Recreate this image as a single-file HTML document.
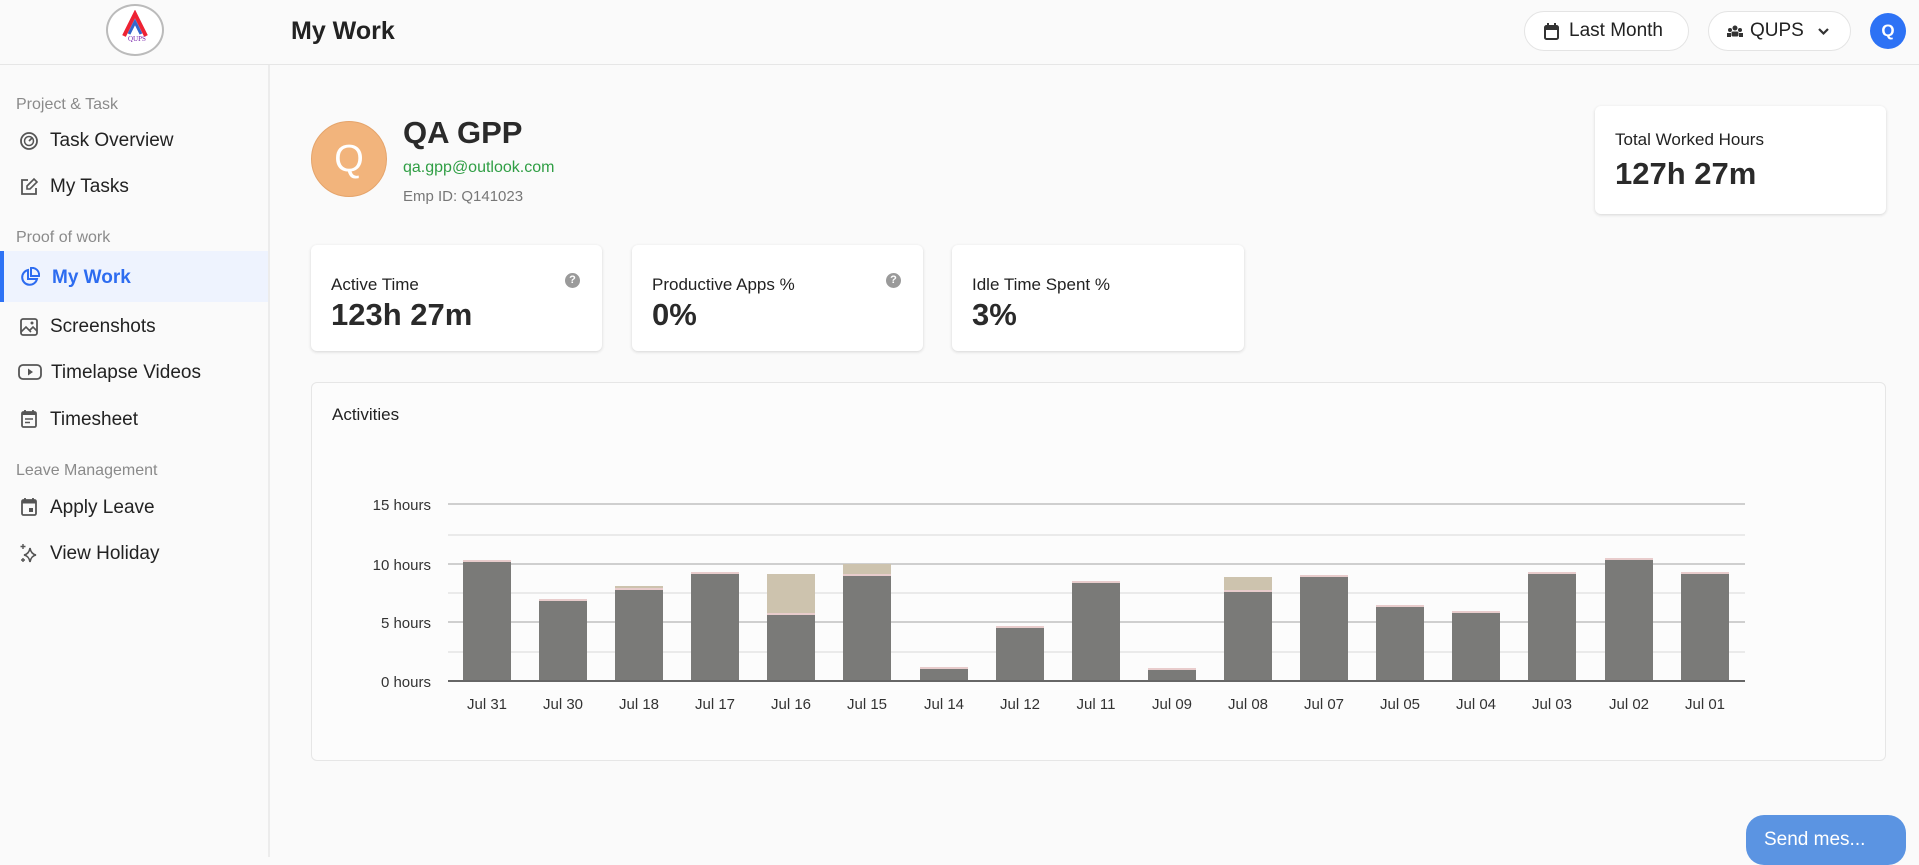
<!DOCTYPE html>
<html><head><meta charset="utf-8"><style>
*{box-sizing:border-box;margin:0;padding:0}
body{width:1919px;height:857px;overflow:hidden;background:#fafafa;font-family:"Liberation Sans",sans-serif;color:#222;position:relative}
.hdr{position:absolute;left:0;top:0;width:1919px;height:65px;border-bottom:1px solid #e6e6e6;background:#fafafa}
.side{position:absolute;left:0;top:65px;width:270px;height:792px;border-right:2px solid #ececec;background:#fafafa}
.lbl{position:absolute;left:16px;font-size:16px;color:#8a8a8a}
.it{position:absolute;left:50px;font-size:19px;color:#222}
.ic{position:absolute;left:19px;width:20px;height:20px}
.card{position:absolute;background:#fff;border-radius:6px;box-shadow:0 1px 3px rgba(0,0,0,.15)}
.ct{position:absolute;left:20px;top:30px;font-size:17px;color:#222}
.cv{position:absolute;left:20px;top:50px;font-size:31px;font-weight:bold;color:#2a2a2a}
.q{position:absolute;right:22px;top:28px;width:15px;height:15px;border-radius:50%;background:#9a9a9a;color:#fff;font-size:11px;font-weight:bold;text-align:center;line-height:15px}
.pill{position:absolute;top:11px;height:40px;border:1px solid #e4e4e4;border-radius:20px;background:#fff;font-size:19px;line-height:38px}
</style></head><body>
<div class="hdr">
 <div style="position:absolute;left:106px;top:4px;width:58px;height:52px;border-radius:50%;border:2px solid #bbb;background:#fff"></div>
 <svg style="position:absolute;left:118px;top:10px" width="34" height="32"><path d="M6 26 L17 4 L28 26" stroke="#e23" stroke-width="4" fill="none"/><path d="M11 24 L17 12 L23 24" stroke="#36c" stroke-width="3" fill="none"/><text x="10" y="31" font-size="7" fill="#72a" font-family="Liberation Serif">QUPS</text></svg>
 <div style="position:absolute;left:291px;top:17px;font-size:25px;font-weight:bold;color:#222">My Work</div>
 <div class="pill" style="left:1524px;width:165px"><svg style="position:absolute;left:19px;top:11px" width="15" height="17" viewBox="0 0 15 17"><rect x="1" y="3" width="13" height="13" rx="1.5" fill="none" stroke="#333" stroke-width="2"/><rect x="1" y="3" width="13" height="4" fill="#333"/><rect x="3" y="0" width="2" height="4" fill="#333"/><rect x="10" y="0" width="2" height="4" fill="#333"/></svg><span style="position:absolute;left:44px">Last Month</span></div>
 <div class="pill" style="left:1708px;width:143px"><svg style="position:absolute;left:18px;top:13px" width="16" height="12"><circle cx="8" cy="3" r="2.5" fill="#333"/><circle cx="3" cy="5" r="2" fill="#333"/><circle cx="13" cy="5" r="2" fill="#333"/><rect x="4.5" y="6.5" width="7" height="5" rx="1.5" fill="#333"/><rect x="0" y="8" width="4" height="4" fill="#333"/><rect x="12" y="8" width="4" height="4" fill="#333"/></svg><span style="position:absolute;left:41px">QUPS</span><svg style="position:absolute;left:108px;top:15px" width="13" height="9"><path d="M2 2 L6.5 6.5 L11 2" stroke="#333" stroke-width="2.2" fill="none"/></svg></div>
 <div style="position:absolute;left:1870px;top:13px;width:36px;height:36px;border-radius:50%;background:#2d72f5;color:#fff;font-weight:bold;font-size:17px;text-align:center;line-height:36px">Q</div>
</div>
<div class="side">
 <div class="lbl" style="top:31px">Project &amp; Task</div>
 <svg class="ic" style="top:66px" viewBox="0 0 20 20"><circle cx="10" cy="10" r="8" fill="none" stroke="#555" stroke-width="1.8"/><circle cx="10" cy="10" r="4.5" fill="none" stroke="#555" stroke-width="1.5"/><path d="M10 10 L13 7" stroke="#555" stroke-width="1.8"/></svg>
 <div class="it" style="top:65px">Task Overview</div>
 <svg class="ic" style="top:112px" viewBox="0 0 20 20"><path d="M9 3 H3 V17 H17 V11" fill="none" stroke="#555" stroke-width="1.8"/><path d="M8 12 L8 9 L15 2 L18 5 L11 12 Z" fill="none" stroke="#555" stroke-width="1.6"/></svg>
 <div class="it" style="top:111px">My Tasks</div>
 <div class="lbl" style="top:164px">Proof of work</div>
 <div style="position:absolute;left:0;top:186px;width:268px;height:51px;background:#eef3fe"></div>
 <div style="position:absolute;left:0;top:186px;width:4px;height:51px;background:#2d72f5"></div>
 <svg class="ic" style="top:202px;left:20px" viewBox="0 0 20 20"><path d="M8 3 A7.5 7.5 0 1 0 17 12 H8 Z" fill="none" stroke="#2d6cf0" stroke-width="2"/><path d="M11 1 A7 7 0 0 1 19 9 H11 Z" fill="none" stroke="#2d6cf0" stroke-width="2"/></svg>
 <div class="it" style="top:202px;left:52px;color:#2d6cf0;font-weight:bold">My Work</div>
 <svg class="ic" style="top:252px" viewBox="0 0 20 20"><rect x="2" y="2" width="16" height="16" rx="2" fill="none" stroke="#555" stroke-width="1.8"/><path d="M2 15 L7 10 L12 15 M11 13 L14 10 L18 14" fill="none" stroke="#555" stroke-width="1.6"/><circle cx="13" cy="6" r="1.5" fill="#555"/></svg>
 <div class="it" style="top:251px">Screenshots</div>
 <svg class="ic" style="top:297px;width:24px;left:18px" viewBox="0 0 24 20"><rect x="1" y="3" width="22" height="14" rx="4" fill="none" stroke="#555" stroke-width="1.8"/><path d="M10 6.5 L15 10 L10 13.5 Z" fill="#555"/></svg>
 <div class="it" style="top:297px;left:51px">Timelapse Videos</div>
 <svg class="ic" style="top:344px" viewBox="0 0 20 20"><rect x="3" y="3" width="14" height="15" rx="1.5" fill="none" stroke="#555" stroke-width="1.8"/><rect x="3" y="3" width="14" height="3" fill="#555"/><path d="M6 10 H14 M6 13.5 H11" stroke="#555" stroke-width="1.6"/><path d="M6 1 V4 M14 1 V4" stroke="#555" stroke-width="1.8"/></svg>
 <div class="it" style="top:344px">Timesheet</div>
 <div class="lbl" style="top:397px">Leave Management</div>
 <svg class="ic" style="top:432px" viewBox="0 0 20 20"><rect x="3" y="3" width="14" height="15" rx="1.5" fill="none" stroke="#555" stroke-width="1.8"/><rect x="3" y="3" width="14" height="3.5" fill="#555"/><rect x="10" y="11" width="4" height="4" fill="#555"/><path d="M6 1 V4 M14 1 V4" stroke="#555" stroke-width="1.8"/></svg>
 <div class="it" style="top:432px">Apply Leave</div>
 <svg class="ic" style="top:478px" viewBox="0 0 20 20"><path d="M11 5 Q12 11 17 12 Q12 13 11 19 Q10 13 5 12 Q10 11 11 5 Z" fill="none" stroke="#555" stroke-width="1.6"/><path d="M4 1 V6 M1.5 3.5 H6.5 M4 15 V19 M2 17 H6" stroke="#555" stroke-width="1.4"/></svg>
 <div class="it" style="top:478px">View Holiday</div>
</div>
<div style="position:absolute;left:311px;top:121px;width:76px;height:76px;border-radius:50%;background:#f2b47c;border:1px solid #e5a46b;color:#fff;font-size:38px;text-align:center;line-height:74px">Q</div>
<div style="position:absolute;left:403px;top:115px;font-size:31px;font-weight:bold;color:#2a2a2a">QA GPP</div>
<div style="position:absolute;left:403px;top:159px;font-size:16px;color:#2f9e44">qa.gpp@outlook.com</div>
<div style="position:absolute;left:403px;top:188px;font-size:15px;color:#777">Emp ID: Q141023</div>
<div class="card" style="left:1595px;top:106px;width:291px;height:108px"><div class="ct" style="top:24px">Total Worked Hours</div><div class="cv" style="top:50px">127h 27m</div></div>
<div class="card" style="left:311px;top:245px;width:291px;height:106px"><div class="ct">Active Time</div><div class="q">?</div><div class="cv" style="top:52px">123h 27m</div></div>
<div class="card" style="left:632px;top:245px;width:291px;height:106px"><div class="ct">Productive Apps %</div><div class="q">?</div><div class="cv" style="top:52px">0%</div></div>
<div class="card" style="left:952px;top:245px;width:292px;height:106px"><div class="ct">Idle Time Spent %</div><div class="cv" style="top:52px">3%</div></div>
<div style="position:absolute;left:311px;top:382px;width:1575px;height:379px;border:1px solid #e6e6e6;border-radius:6px;background:#fcfcfc"></div>
<div style="position:absolute;left:332px;top:405px;font-size:17px;color:#222">Activities</div>
<svg style="position:absolute;left:0;top:0" width="1919" height="857" font-family="Liberation Sans" font-size="15" fill="#333">
<g stroke="#eaeaea" stroke-width="2"><line x1="448" y1="535" x2="1745" y2="535"/><line x1="448" y1="593" x2="1745" y2="593"/><line x1="448" y1="652" x2="1745" y2="652"/></g>
<g stroke="#cfcfcf" stroke-width="2"><line x1="448" y1="504" x2="1745" y2="504"/><line x1="448" y1="564" x2="1745" y2="564"/><line x1="448" y1="622" x2="1745" y2="622"/></g>
<g text-anchor="end"><text x="431" y="510">15 hours</text><text x="431" y="570">10 hours</text><text x="431" y="628">5 hours</text><text x="431" y="687">0 hours</text></g>
<g fill="#cdc3ae"><rect x="615" y="586" width="48" height="4"/><rect x="767" y="574" width="48" height="41"/><rect x="843" y="564" width="48" height="12"/><rect x="1224" y="577" width="48" height="15"/></g>
<g fill="#7a7a78">
<rect x="463" y="562" width="48" height="119"/><rect x="539" y="601" width="48" height="80"/><rect x="615" y="590" width="48" height="91"/><rect x="691" y="574" width="48" height="107"/><rect x="767" y="615" width="48" height="66"/><rect x="843" y="576" width="48" height="105"/><rect x="920" y="669" width="48" height="12"/><rect x="996" y="628" width="48" height="53"/><rect x="1072" y="583" width="48" height="98"/><rect x="1148" y="670" width="48" height="11"/><rect x="1224" y="592" width="48" height="89"/><rect x="1300" y="577" width="48" height="104"/><rect x="1376" y="607" width="48" height="74"/><rect x="1452" y="613" width="48" height="68"/><rect x="1528" y="574" width="48" height="107"/><rect x="1605" y="560" width="48" height="121"/><rect x="1681" y="574" width="48" height="107"/></g>
<g fill="#e8cccc">
<rect x="463" y="560" width="48" height="2"/><rect x="539" y="599" width="48" height="2"/><rect x="615" y="588" width="48" height="2"/><rect x="691" y="572" width="48" height="2"/><rect x="767" y="613" width="48" height="2"/><rect x="843" y="574" width="48" height="2"/><rect x="920" y="667" width="48" height="2"/><rect x="996" y="626" width="48" height="2"/><rect x="1072" y="581" width="48" height="2"/><rect x="1148" y="668" width="48" height="2"/><rect x="1224" y="590" width="48" height="2"/><rect x="1300" y="575" width="48" height="2"/><rect x="1376" y="605" width="48" height="2"/><rect x="1452" y="611" width="48" height="2"/><rect x="1528" y="572" width="48" height="2"/><rect x="1605" y="558" width="48" height="2"/><rect x="1681" y="572" width="48" height="2"/></g>
<line x1="448" y1="681" x2="1745" y2="681" stroke="#666" stroke-width="2"/>
<g text-anchor="middle"><text x="487" y="709">Jul 31</text><text x="563" y="709">Jul 30</text><text x="639" y="709">Jul 18</text><text x="715" y="709">Jul 17</text><text x="791" y="709">Jul 16</text><text x="867" y="709">Jul 15</text><text x="944" y="709">Jul 14</text><text x="1020" y="709">Jul 12</text><text x="1096" y="709">Jul 11</text><text x="1172" y="709">Jul 09</text><text x="1248" y="709">Jul 08</text><text x="1324" y="709">Jul 07</text><text x="1400" y="709">Jul 05</text><text x="1476" y="709">Jul 04</text><text x="1552" y="709">Jul 03</text><text x="1629" y="709">Jul 02</text><text x="1705" y="709">Jul 01</text></g>
</svg>
<div style="position:absolute;left:1746px;top:815px;width:160px;height:50px;border-radius:18px;background:#5b94e2;color:#fff;font-size:19px;padding:14px 0 0 18px">Send mes...</div>
</body></html>
